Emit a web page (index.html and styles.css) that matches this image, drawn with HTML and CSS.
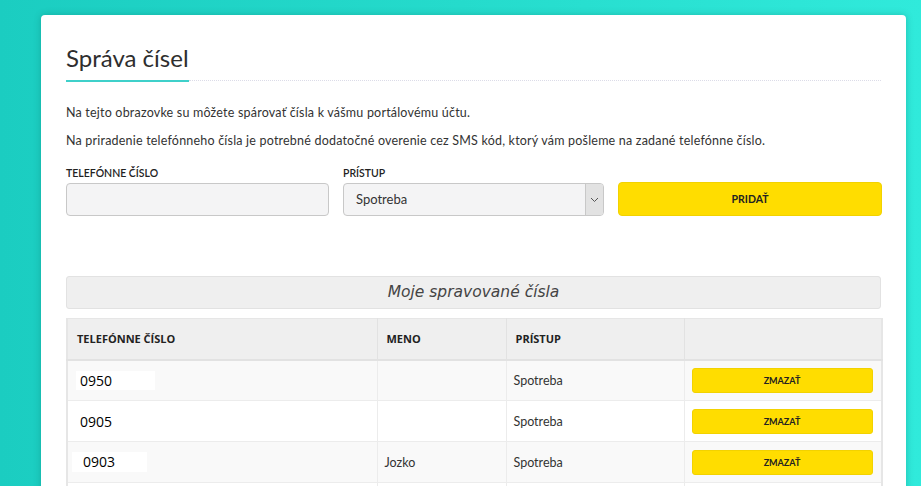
FILE: index.html
```html
<!DOCTYPE html>
<html lang="sk">
<head>
<meta charset="utf-8">
<title>Správa čísel</title>
<link rel="stylesheet" href="styles.css">
</head>
<body>
<div class="page">
  <main class="card">
    <div class="title-row">
      <h1 class="title">Správa čísel</h1>
      <div class="title-rule"></div>
    </div>
    <p class="intro">Na tejto obrazovke su môžete spárovať čísla k vášmu portálovému účtu.</p>
    <p class="intro">Na priradenie telefónneho čísla je potrebné dodatočné overenie cez SMS kód, ktorý vám pošleme na zadané telefónne číslo.</p>
    <form class="add-form">
      <div class="field">
        <span class="field-label">TELEFÓNNE ČÍSLO</span>
        <input class="input" type="text">
      </div>
      <div class="field">
        <span class="field-label">PRÍSTUP</span>
        <div class="select">
          <span class="select-value">Spotreba</span>
          <span class="select-arrow">
            <svg width="9" height="6" viewBox="0 0 9 6"><path d="M1 1 L4.5 4.5 L8 1" fill="none" stroke="#555" stroke-width="1"/></svg>
          </span>
        </div>
      </div>
      <div class="field">
        <button class="btn btn-add" type="button">PRIDAŤ</button>
      </div>
    </form>
    <div class="caption">Moje spravované čísla</div>
    <table class="grid">
      <colgroup>
        <col class="c-phone"><col class="c-name"><col class="c-access"><col class="c-action">
      </colgroup>
      <thead>
        <tr><th>TELEFÓNNE ČÍSLO</th><th>MENO</th><th>PRÍSTUP</th><th></th></tr>
      </thead>
      <tbody>
        <tr class="alt">
          <td><span class="num num-a">0950</span></td>
          <td></td>
          <td>Spotreba</td>
          <td><button class="btn btn-del" type="button">ZMAZAŤ</button></td>
        </tr>
        <tr>
          <td><span class="num num-b">0905</span></td>
          <td></td>
          <td>Spotreba</td>
          <td><button class="btn btn-del" type="button">ZMAZAŤ</button></td>
        </tr>
        <tr class="alt">
          <td><span class="num num-c">0903</span></td>
          <td>Jozko</td>
          <td>Spotreba</td>
          <td><button class="btn btn-del" type="button">ZMAZAŤ</button></td>
        </tr>
        <tr>
          <td></td><td></td><td></td><td></td>
        </tr>
      </tbody>
    </table>
  </main>
</div>
</body>
</html>
```

FILE: styles.css
```css
* { box-sizing: border-box; }
html, body { margin: 0; height: 100%; }
body {
  background: linear-gradient(90deg, #1bcdc1 0%, #25dbcc 50%, #30eadb 100%);
  font-family: "Lato", "Open Sans", sans-serif;
  color: #333;
  overflow: hidden;
}
.page { padding: 15px 0 0 41px; }
.card {
  width: 865px;
  min-height: 540px;
  background: #fff;
  border-radius: 4px;
  box-shadow: 0 0 7px rgba(0, 90, 80, 0.3);
  padding: 28px 25px 0;
}
.title-row { display: flex; align-items: flex-end; }
.title {
  margin: 0;
  font-size: 24px;
  font-weight: 400;
  line-height: 30px;
  color: #2e2e2e;
  padding-bottom: 7px;
  border-bottom: 2px solid #3fd0ca;
}
.title-rule { flex: 1; border-bottom: 1px dotted #dcdce8; margin-bottom: 1px; }

.intro {
  margin: 22px 0 0;
  font-size: 12.5px;
  letter-spacing: 0.2px;
  line-height: 18px;
  color: #333;
}
.intro + .intro { margin-top: 10px; }

.add-form {
  display: grid;
  grid-template-columns: 263px 261px 264px;
  column-gap: 14px;
  margin-top: 17px;
  align-items: end;
}
.field { display: flex; flex-direction: column; }
.field-label {
  font-size: 10.5px;
  line-height: 13px;
  font-weight: 600;
  color: #222;
  margin-bottom: 3px;
}
.input {
  height: 33px;
  border: 1px solid #c8c8c8;
  border-radius: 4px;
  background: #f4f4f5;
  font: inherit;
}
.select {
  height: 33px;
  border: 1px solid #c8c8c8;
  border-radius: 4px;
  background: #f4f4f5;
  display: flex;
  align-items: stretch;
  overflow: hidden;
}
.select-value {
  flex: 1;
  padding-left: 12px;
  font-size: 13px;
  line-height: 31px;
  color: #333;
}
.select-arrow {
  width: 18px;
  background: #e2e2e2;
  border-left: 1px solid #c8c8c8;
  display: flex;
  align-items: center;
  justify-content: center;
}
.btn {
  font-family: "Lato", "Open Sans", sans-serif;
  font-weight: 700;
  color: #222;
  background: #ffdd00;
  border: 1px solid #f2d200;
  border-radius: 4px;
  cursor: pointer;
}
.btn-add { height: 34px; font-size: 10.5px; width: 100%; }

.caption {
  margin-top: 60px;
  height: 33px;
  background: #efefef;
  border: 1px solid #e2e2e2;
  border-radius: 3px;
  text-align: center;
  font-family: "DejaVu Sans", "Open Sans", sans-serif;
  font-style: italic;
  font-size: 15.5px;
  line-height: 31px;
  color: #444;
}

.grid {
  margin-top: 9px;
  width: 815px;
  border-collapse: collapse;
  table-layout: fixed;
  border: 2px solid #e6e6e6;
  border-top-width: 1px;
}
.c-phone { width: 310px; }
.c-name { width: 129px; }
.c-access { width: 178px; }
.c-action { width: 198px; }
.grid th {
  height: 41px;
  background: #efefef;
  text-align: left;
  font-family: "Open Sans", sans-serif;
  font-weight: 700;
  font-size: 11px;
  color: #222;
  padding: 0 9px;
  border-right: 1px solid #e2e2e2;
  border-bottom: 2px solid #e2e2e2;
}
.grid td {
  height: 41px;
  padding: 0 7px;
  font-size: 12.5px;
  color: #333;
  border-right: 1px solid #ececec;
  border-bottom: 1px solid #ececec;
}
.grid tr.alt td { background: #f9f9f9; }
.num {
  display: inline-block;
  background: #fff;
  font-family: "Open Sans", sans-serif;
  font-size: 14px;
  color: #000;
  line-height: 19px;
}
.num-a { width: 79px; margin-left: 1px; padding-left: 4px; }
.num-b { width: 79px; margin-left: 1px; padding-left: 4px; }
.num-c { width: 75px; height: 20px; line-height: 20px; margin-left: -3px; padding-left: 11px; }
.btn-del {
  width: 181px;
  height: 25px;
  font-size: 9px;
  border-radius: 3px;
  display: block;
}
```
